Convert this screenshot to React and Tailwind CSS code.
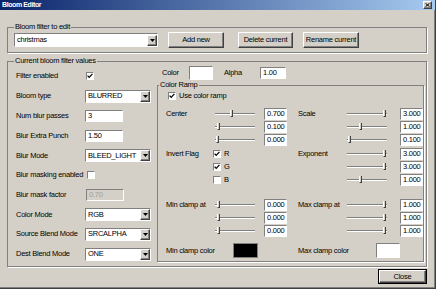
import React from 'react';

// classic win32 look at a small scale
const sunken = 'border border-t-[#808080] border-l-[#808080] border-b-white border-r-white';
const raised = 'border border-t-white border-l-white border-b-[#404040] border-r-[#404040] shadow-[inset_-1px_-1px_0_#808080]';
const group = 'border border-[#808080] shadow-[1px_1px_0_#fff]';

function CheckBox({ checked }) {
  return (
    <div className={`w-[8px] h-[8px] bg-white ${sunken} flex items-center justify-center shrink-0`}>
      {checked && (
        <svg width="6" height="6" viewBox="0 0 6 6">
          <path d="M0.6 2.6 L2.2 4.4 L5.4 0.9" fill="none" stroke="#000" strokeWidth="1.3" />
        </svg>
      )}
    </div>
  );
}

function Combo({ value, className }) {
  return (
    <div className={`h-[13px] bg-white ${sunken} flex items-center pl-[2px] ${className}`}>
      <span className="whitespace-nowrap">{value}</span>
      <div className={`ml-auto w-[10px] h-[11px] bg-[#d4d0c8] ${raised} flex items-center justify-center`}>
        <svg width="5" height="3" viewBox="0 0 5 3"><path d="M0 0h5L2.5 3z" fill="#000" /></svg>
      </div>
    </div>
  );
}

function Edit({ value, className, disabled }) {
  return (
    <div className={`h-[12px] ${sunken} ${disabled ? 'bg-[#d4d0c8] text-[#a0a0a0]' : 'bg-white'} flex items-center pl-[2px] whitespace-nowrap ${className}`}>
      {value}
    </div>
  );
}

function Slider({ pos }) {
  return (
    <div className="relative w-[40px] h-[9px] shrink-0">
      <div className="absolute left-0 right-0 top-[4px] h-[2px] border-t border-t-[#808080] border-b border-b-white" />
      <div
        className="absolute top-[1px] w-[3px] h-[7px] bg-[#d4d0c8] border-l border-l-white border-r border-r-[#404040] border-b border-b-[#404040]"
        style={{ left: pos }}
      />
    </div>
  );
}

function SliderRow({ label, pos, value, gap }) {
  return (
    <div className="h-[13px] flex items-center">
      <div className="w-[49px] whitespace-nowrap">{label}</div>
      <Slider pos={pos} />
      <Edit value={value} className={`w-[23px] h-[11px] ${gap}`} />
    </div>
  );
}

function Button({ children, className }) {
  return (
    <div className={`h-[16px] bg-[#d4d0c8] ${raised} flex items-center justify-center whitespace-nowrap ${className}`}>
      {children}
    </div>
  );
}

const App = () => {
  const leftRows = [
    ['Filter enabled', 'h-[21px]', <div className="ml-[1px]"><CheckBox checked /></div>],
    ['Bloom type', 'h-[20px]', <Combo value="BLURRED" className="w-[66px]" />],
    ['Num blur passes', 'h-[20px]', <Edit value="3" className="w-[38px]" />],
    ['Blur Extra Punch', 'h-[20px]', <Edit value="1.50" className="w-[38px]" />],
    ['Blur Mode', 'h-[19px]', <Combo value="BLEED_LIGHT" className="w-[66px]" />],
    ['Blur masking enabled', 'h-[20px]', <div className="ml-[2px]"><CheckBox /></div>],
    ['Blur mask factor', 'h-[20px]', <Edit value="0.70" disabled className="w-[38px] ml-[1px]" />],
    ['Color Mode', 'h-[19px]', <Combo value="RGB" className="w-[66px]" />],
    ['Source Blend Mode', 'h-[20px]', <Combo value="SRCALPHA" className="w-[66px]" />],
    ['Dest Blend Mode', 'h-[20px]', <Combo value="ONE" className="w-[66px]" />],
  ];

  return (
    <div className="w-[436px] h-[289px] bg-[#d4d0c8] font-['Liberation_Sans',Arial,sans-serif] text-[7.5px] tracking-[-0.25px] leading-[8px] text-black border-r border-b border-r-[#404040] border-b-[#404040] shadow-[inset_-1px_-1px_0_#808080] flex flex-col">
      {/* title bar */}
      <div className="w-full h-[10px] flex items-center justify-between bg-[linear-gradient(to_right,#0a246a,#a6caf0)] pl-[2px] pr-[3px]">
        <span className="text-white font-bold text-[7px] tracking-[-0.4px]">Bloom Editor</span>
        <div className={`w-[9px] h-[8px] bg-[#d4d0c8] ${raised} flex items-center justify-center`}>
          <svg width="5" height="4" viewBox="0 0 5 4"><path d="M0.5 0.3 L4.5 3.7 M4.5 0.3 L0.5 3.7" stroke="#000" strokeWidth="1" /></svg>
        </div>
      </div>

      <div className="flex flex-col pl-[7px]">
        {/* Bloom filter to edit */}
        <fieldset className={`w-[420px] mt-[13px] ${group}`}>
          <legend className="ml-[6px] px-[1px] leading-[8px]">Bloom filter to edit</legend>
          <div className="h-[16px] mt-[1px] mb-[4px] pl-[6px] flex items-center">
            <Combo value="christmas" className="w-[144px] h-[14px]" />
            <Button className="w-[56px] ml-[10px]">Add new</Button>
            <Button className="w-[55px] ml-[14px]">Delete current</Button>
            <Button className="w-[56px] ml-[10px]">Rename current</Button>
          </div>
        </fieldset>

        {/* Current bloom filter values */}
        <fieldset className={`w-[420px] mt-[4px] ${group}`}>
          <legend className="ml-[6px] px-[1px] leading-[8px]">Current bloom filter values</legend>
          <div className="flex pb-[2px]">
            <div className="w-[149px] flex flex-col pl-[8px]">
              {leftRows.map(([label, h, ctrl]) => (
                <div key={label} className={`${h} flex items-center`}>
                  <div className="w-[69px] whitespace-nowrap">{label}</div>
                  {ctrl}
                </div>
              ))}
            </div>

            <div className="w-[267px] flex flex-col">
              <div className="h-[16px] flex items-center pl-[5px]">
                <div className="w-[27px]">Color</div>
                <div className={`w-[24px] h-[14px] bg-white ${sunken}`} />
                <div className="w-[36px] ml-[11px]">Alpha</div>
                <Edit value="1.00" className="w-[26px]" />
              </div>

              <fieldset className={`w-[267px] ${group}`}>
                <legend className="ml-[1px] px-[1px] leading-[8px]">Color Ramp</legend>
                <div className="h-[14px] flex items-center pl-[10px]">
                  <CheckBox checked />
                  <span className="ml-[3px]">Use color ramp</span>
                </div>
                <div className="flex pb-[3px]">
                  <div className="w-[139px] pl-[8px] flex flex-col">
                    <div className="mt-[4px]">
                      <SliderRow label="Center" pos={15} value="0.700" gap="ml-[9px]" />
                      <SliderRow label="" pos={2} value="0.100" gap="ml-[9px]" />
                      <SliderRow label="" pos={1} value="0.000" gap="ml-[9px]" />
                    </div>
                    <div className="mt-[1px]">
                      {[['Invert Flag', 'R', true], ['', 'G', true], ['', 'B', false]].map(([l, c, on]) => (
                        <div key={c} className="h-[13px] flex items-center">
                          <div className="w-[47px] whitespace-nowrap">{l}</div>
                          <CheckBox checked={on} />
                          <span className="ml-[3px]">{c}</span>
                        </div>
                      ))}
                    </div>
                    <div className="mt-[12px]">
                      <SliderRow label="Min clamp at" pos={2} value="0.000" gap="ml-[9px]" />
                      <SliderRow label="" pos={2} value="0.000" gap="ml-[9px]" />
                      <SliderRow label="" pos={2} value="0.000" gap="ml-[9px]" />
                    </div>
                    <div className="mt-[6px] h-[15px] flex items-center">
                      <div className="w-[67px] whitespace-nowrap">Min clamp color</div>
                      <div className="w-[25px] h-[15px] bg-black border border-[#808080]" />
                    </div>
                  </div>

                  <div className="w-[126px] pl-[1px] flex flex-col">
                    <div className="mt-[4px]">
                      <SliderRow label="Scale" pos={36} value="3.000" gap="ml-[13px]" />
                      <SliderRow label="" pos={12} value="1.000" gap="ml-[13px]" />
                      <SliderRow label="" pos={1} value="0.100" gap="ml-[13px]" />
                    </div>
                    <div className="mt-[1px]">
                      <SliderRow label="Exponent" pos={36} value="3.000" gap="ml-[13px]" />
                      <SliderRow label="" pos={36} value="3.000" gap="ml-[13px]" />
                      <SliderRow label="" pos={12} value="1.000" gap="ml-[13px]" />
                    </div>
                    <div className="mt-[12px]">
                      <SliderRow label="Max clamp at" pos={36} value="1.000" gap="ml-[13px]" />
                      <SliderRow label="" pos={36} value="1.000" gap="ml-[13px]" />
                      <SliderRow label="" pos={36} value="1.000" gap="ml-[13px]" />
                    </div>
                    <div className="mt-[6px] h-[15px] flex items-center">
                      <div className="w-[78px] whitespace-nowrap">Max clamp color</div>
                      <div className={`w-[24px] h-[15px] bg-white ${sunken}`} />
                    </div>
                  </div>
                </div>
              </fieldset>
            </div>
          </div>
        </fieldset>

        <div className="flex justify-end pr-[8px] mt-[2px]">
          <div className="w-[49px] h-[15px] border border-black">
            <div className={`h-full bg-[#d4d0c8] ${raised} flex items-center justify-center`}>Close</div>
          </div>
        </div>
      </div>
    </div>
  );
};

export default App;
